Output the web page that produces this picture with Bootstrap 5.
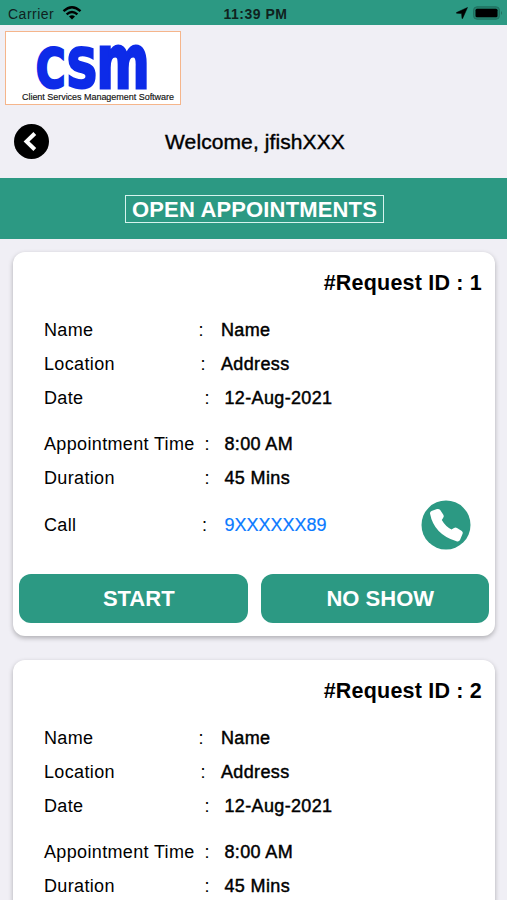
<!DOCTYPE html>
<html lang="en">
<head>
<meta charset="utf-8">
<meta name="viewport" content="width=device-width, initial-scale=1">
<title>Open Appointments</title>
<link href="https://cdn.jsdelivr.net/npm/bootstrap@5.3.0/dist/css/bootstrap.min.css" rel="stylesheet">
<style>
  :root { --brand: #2c9983; }
  body { height: 900px; overflow: hidden; background: #f0eff5; color: #000; font-family: "Liberation Sans", Arial, sans-serif; }
  .status-bar { height: 25px; background: var(--brand); font-size: 14px; letter-spacing: .5px; color: #10221e; }
  .status-bar .clock { font-weight: 700; font-size: 14px; letter-spacing: .5px; }
  .status-side { flex: 1 1 0; }
  .logo-box { width: 176px; height: 74px; margin: 6px 0 0 5px; border: 1px solid #f5b58b; background: #fff; }
  .welcome { height: 73px; padding-left: 14px; padding-right: 14px; }
  .welcome h1 { font-size: 21px; letter-spacing: .1px; -webkit-text-stroke: .4px #000; }
  .back-link { width: 35px; }
  .title-band { height: 61px; background: var(--brand); }
  .title-band h2 { border: 1.5px solid #d6f3ee; width: 259px; height: 28px; font-size: 22px; line-height: 28px; font-weight: 700; letter-spacing: .15px; margin-left: 2px !important; }
  .visit-list { padding: 13px 12px 0 13px; gap: 24px; }
  .visit { height: 384px; border: 0; border-radius: 12px; box-shadow: 0 2px 5px rgba(0,0,0,.28); padding: 0 6px; flex: none; }
  .visit-id { height: 62px; margin-bottom: -1px; padding-right: 7px; font-size: 21.5px; font-weight: 700; letter-spacing: .2px; }
  .field { height: 34.2px; padding-left: 25px; font-size: 18px; letter-spacing: .35px; line-height: 1; }
  .field dt { width: 154px; font-weight: 400; white-space: nowrap; }
  .field .sep { width: 23px; padding-left: .6px; }
  .field .sep.s2 { padding-left: 2.6px; }
  .field .sep.s3 { padding-left: 6.5px; width: 26.5px; }
  .call-field .sep.s3 { padding-left: 4px; }
  .field dd { margin: 0; -webkit-text-stroke: .45px #000; }
  .field a { color: #0a7aff; letter-spacing: 0; -webkit-text-stroke: .2px #0a7aff; }
  .time-field { margin-top: 11px; }
  .call-field { height: 50px; margin-top: 5px; padding-right: 18px; }
  .actions { gap: 13px; margin-top: 24px; }
  .actions .btn { height: 49px; border-radius: 12px; background: var(--brand); color: #fff; font-weight: 700; font-size: 22px; border: 0; padding: 1px 0 0 11px; }
</style>
<script src="https://cdn.jsdelivr.net/npm/bootstrap@5.3.0/dist/js/bootstrap.bundle.min.js"></script>
</head>
<body>
<header>
  <div class="status-bar d-flex align-items-center pt-1">
    <div class="status-side d-flex align-items-center ps-2 gap-1"><span>Carrier</span>
      <svg class="ms-1 mb-1" width="20" height="14" viewBox="0 0 20 14" fill="none" stroke="#000" stroke-width="2.4"><path d="M1.5 5.2Q10-2.6 18.500 5.200M4.600 8.300Q10 3.600 15.400 8.300"/><path d="M7 10.600Q10 8 13 10.600L10 13.600Z" fill="#000" stroke="none"/></svg>
    </div>
    <span class="clock">11:39 PM</span>
    <div class="status-side d-flex align-items-center justify-content-end gap-1 pe-1">
      <svg class="mb-1" width="12" height="12" viewBox="0 0 12 12"><path d="M11.500 .500L.500 5.500V6.200L5.600 6.500L6 11.500H6.600Z" stroke="#000" stroke-width=".5"/></svg>
      <svg class="mb-1" width="31" height="14" viewBox="0 0 31 14"><rect x="1.500" y=".8" width="26" height="12.400" rx="3.500" fill="#23806d" stroke="#20705f"/><rect x="3.500" y="2.800" width="22" height="8.400" rx="1.500"/><path d="M29 5Q31 7 29 9Z" fill="#20705f"/></svg>
    </div>
  </div>
  <div class="logo-box">
    <svg width="174" height="72" viewBox="6 32 174 72" role="img" aria-label="CSM Client Services Management Software" class="d-block" font-family="Liberation Sans, Arial, sans-serif">
      <g fill="#0d2be8" stroke="#0d2be8" stroke-width="3" font-weight="700" font-family="DejaVu Sans, sans-serif">
        <text transform="translate(36 86.700) scale(.74 1)" font-size="54">C</text>
        <text transform="translate(66.500 86.700) scale(.8 1)" font-size="54">S</text>
        <text transform="translate(96.500 87.500) scale(.69 1)" font-size="74">m</text>
      </g>
      <text x="22" y="100.300" font-size="9" textLength="152" fill="#111" stroke="#111" stroke-width=".15">Client Services Management Software</text>
    </svg>
  </div>
  <div class="welcome d-flex align-items-center">
    <a href="#" class="back-link" aria-label="Back"><svg class="d-block" width="35" height="35" viewBox="0 0 35 35"><circle cx="17.500" cy="17.500" r="17.500"/><path d="M20.800 9.500L12.500 17.500L20.800 25.500" fill="none" stroke="#fff" stroke-width="4"/></svg></a>
    <h1 class="flex-grow-1 text-center m-0 pe-4 me-2">Welcome, jfishXXX</h1>
  </div>
</header>
<div class="title-band d-flex align-items-center justify-content-center text-white"><h2 class="m-0 text-center">OPEN APPOINTMENTS</h2></div>
<main class="visit-list d-flex flex-column">
  <article class="visit card">
    <div class="visit-id d-flex align-items-center justify-content-end">#Request ID : 1</div>
    <dl class="m-0">
      <div class="field d-flex align-items-center"><dt>Name</dt><span class="sep">:</span><dd>Name</dd></div>
      <div class="field d-flex align-items-center"><dt>Location</dt><span class="sep s2">:</span><dd>Address</dd></div>
      <div class="field d-flex align-items-center"><dt>Date</dt><span class="sep s3">:</span><dd>12-Aug-2021</dd></div>
      <div class="field time-field d-flex align-items-center"><dt>Appointment Time</dt><span class="sep s3">:</span><dd>8:00 AM</dd></div>
      <div class="field d-flex align-items-center"><dt>Duration</dt><span class="sep s3">:</span><dd>45 Mins</dd></div>
      <div class="field call-field d-flex align-items-center"><dt>Call</dt><span class="sep s3">:</span><dd class="flex-grow-1"><a href="#" class="text-decoration-none">9XXXXXX89</a></dd>
        <svg width="50" height="50" viewBox="0 0 50 50"><circle cx="25" cy="25" r="24.500" fill="#2c9983"/><path d="M10.500 11L16 9Q18 8.500 19.200 10L22.500 15Q23.200 16.500 22.200 17.800L20.800 20Q24.500 26.500 30.500 29.500L33 28Q34.500 27 36 28L40.800 31Q42.200 32 41.700 33.500L39 40Q38 42 35.500 41.300Q13 34.500 9 13.500Q8.800 11.700 10.500 11Z" fill="#fff"/></svg></div>
    </dl>
    <div class="actions d-flex"><button class="btn flex-fill w-50">START</button><button class="btn flex-fill w-50">NO SHOW</button></div>
  </article>
  <article class="visit card">
    <div class="visit-id d-flex align-items-center justify-content-end">#Request ID : 2</div>
    <dl class="m-0">
      <div class="field d-flex align-items-center"><dt>Name</dt><span class="sep">:</span><dd>Name</dd></div>
      <div class="field d-flex align-items-center"><dt>Location</dt><span class="sep s2">:</span><dd>Address</dd></div>
      <div class="field d-flex align-items-center"><dt>Date</dt><span class="sep s3">:</span><dd>12-Aug-2021</dd></div>
      <div class="field time-field d-flex align-items-center"><dt>Appointment Time</dt><span class="sep s3">:</span><dd>8:00 AM</dd></div>
      <div class="field d-flex align-items-center"><dt>Duration</dt><span class="sep s3">:</span><dd>45 Mins</dd></div>
    </dl>
  </article>
</main>
</body>
</html>
